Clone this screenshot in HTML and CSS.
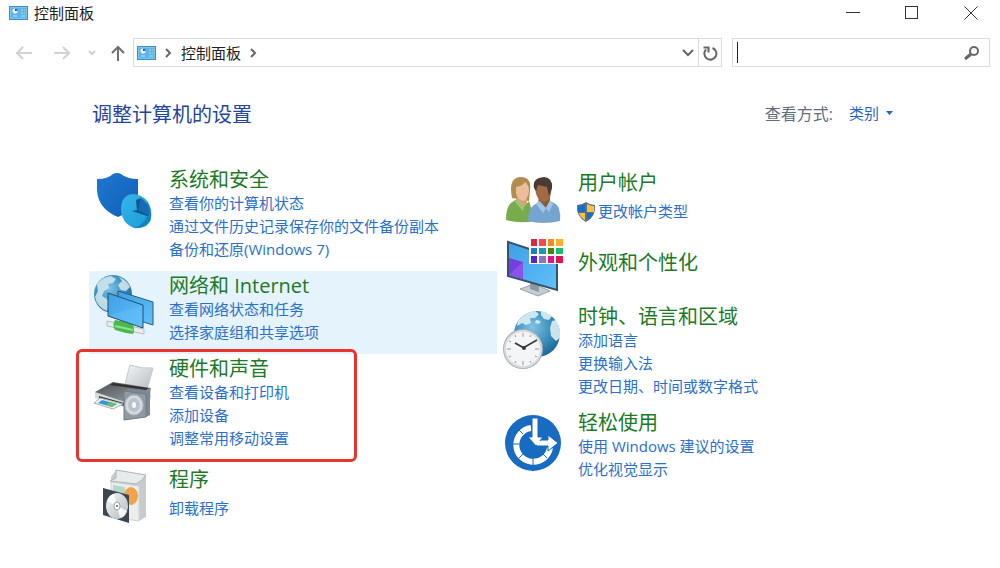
FILE: index.html
```html
<!DOCTYPE html>
<html lang="zh-CN">
<head>
  <meta charset="UTF-8" />
  <meta name="viewport" content="width=device-width, initial-scale=1.0" />
  <title>控制面板</title>
  <link rel="stylesheet" href="styles.css">
</head>
<body>
  <svg width="0" height="0" class="defs" aria-hidden="true">
    <defs>
      <linearGradient id="blue" x1="0" y1="0" x2="1" y2="1"><stop offset="0" stop-color="#1f78cf"/><stop offset="1" stop-color="#0f5fb8"/></linearGradient>
      <linearGradient id="pie" x1="0" y1="0" x2="1" y2="1"><stop offset="0" stop-color="#35b5ea"/><stop offset="1" stop-color="#199bd6"/></linearGradient>
      <linearGradient id="screen" x1="0" y1="0" x2="1" y2="1"><stop offset="0" stop-color="#3d9fe6"/><stop offset="1" stop-color="#62bff8"/></linearGradient>
      <linearGradient id="metal" x1="0" y1="0" x2="1" y2="1"><stop offset="0" stop-color="#f4f6f7"/><stop offset="1" stop-color="#b4bbc0"/></linearGradient>
      <linearGradient id="dark" x1="0" y1="0" x2="1" y2="1"><stop offset="0" stop-color="#4c5053"/><stop offset="1" stop-color="#a0a4a6"/></linearGradient>
      <radialGradient id="globe" cx=".4" cy=".35" r=".7"><stop offset="0" stop-color="#7fc4e4"/><stop offset=".6" stop-color="#388dbb"/><stop offset="1" stop-color="#1d6594"/></radialGradient>
      <symbol id="panel" viewBox="0 0 19 14">
        <rect x=".5" y=".5" width="18" height="13" fill="#79c6f3" stroke="#3d8fc4"/>
        <rect x="2" y="2" width="15" height="10" fill="#5ab4ed"/>
        <circle cx="6" cy="5" r="2.5" fill="#fff"/>
        <path d="M6 5V2.500A2.500 2.500 0 0 1 8.500 5z" fill="#1c5c9c"/>
        <path d="M12 4h2M12 7h2M4 10h4M12 10h4" stroke="#b4e0fb"/>
        <path d="M15 4h1M15 7h1" stroke="#f5d76c"/>
      </symbol>
    </defs>
  </svg>

  <header class="titlebar">
    <svg class="panel-icon" aria-hidden="true"><use href="#panel"/></svg>
    <span class="title">控制面板</span>
    <div class="window-buttons">
      <button aria-label="最小化"><svg width="14" height="14"><path d="M0 6.500h14" stroke="#333"/></svg></button>
      <button aria-label="最大化"><svg width="14" height="14"><rect x=".5" y=".5" width="12" height="12" fill="none" stroke="#333"/></svg></button>
      <button aria-label="关闭"><svg width="14" height="14"><path d="M.5.5l13 13M13.500.5l-13 13" stroke="#333"/></svg></button>
    </div>
  </header>

  <nav class="navbar">
    <div class="history">
      <button aria-label="后退"><svg width="16" height="14" fill="none" stroke="#d2d2d2" stroke-width="2"><path d="M16 7H1M7 1L1 7l6 6"/></svg></button>
      <button aria-label="前进"><svg width="16" height="14" fill="none" stroke="#d2d2d2" stroke-width="2"><path d="M0 7h15M9 1l6 6-6 6"/></svg></button>
      <button class="recent" aria-label="最近浏览的位置"><svg width="8" height="6" fill="none" stroke="#cfcfcf" stroke-width="2"><path d="M1 1l3 3 3-3"/></svg></button>
      <button aria-label="上移"><svg width="16" height="16" fill="none" stroke="#707070" stroke-width="2"><path d="M8 16V2M2 8l6-6 6 6"/></svg></button>
    </div>
    <div class="address">
      <svg class="panel-icon" aria-hidden="true"><use href="#panel"/></svg>
      <svg class="chevron" width="7" height="10" fill="none" stroke="#666" stroke-width="2"><path d="M1 1l4 4-4 4"/></svg>
      <a href="#">控制面板</a>
      <svg class="chevron" width="7" height="10" fill="none" stroke="#666" stroke-width="2"><path d="M1 1l4 4-4 4"/></svg>
      <button class="history-list" aria-label="以前的位置"><svg width="12" height="8" fill="none" stroke="#666" stroke-width="2"><path d="M1 1l5 5 5-5"/></svg></button>
      <button class="refresh" aria-label="刷新"><svg width="16" height="16" fill="none" stroke="#666" stroke-width="2"><path d="M10.500 3A6 6 0 1 1 4 4.500"/><path d="M1.500 2.500H6.500V7.500"/></svg></button>
    </div>
    <div class="search">
      <span class="caret"></span>
      <input type="text" aria-label="搜索控制面板">
      <button aria-label="搜索"><svg width="16" height="16" fill="none" stroke="#666"><circle cx="10" cy="6" r="4" stroke-width="2"/><path d="M7 9l-6 5" stroke-width="3"/></svg></button>
    </div>
  </nav>

  <main>
    <div class="heading">
      <h1>调整计算机的设置</h1>
      <div class="view-by">
        <label for="view">查看方式:</label>
        <select id="view"><option>类别</option></select>
        <svg width="7" height="4"><path d="M0 0h7L3.500 4z" fill="#1f66c4"/></svg>
      </div>
    </div>

    <div class="categories">
      <div class="column">
        <section class="category">
          <svg class="icon" viewBox="0 0 64 60" aria-hidden="true">
            <path d="M4 9Q15 9 20 4Q24 2 28 4Q34 9 45 9V24Q44 39 25 47Q5 39 4 20z" fill="url(#blue)"/>
            <path d="M28 38Q29 24 41 24Q55 26 58 40Q60 51 53 56Q47 59 41 58Q28 53 28 38z" fill="url(#pie)"/>
            <path d="M54 31Q60 42 57 51Q52 58 41 58Q52 54 54 46z" fill="#1283bc"/>
            <path d="M48 28L44 40 56 45Q57 34 48 28z" fill="#1769b2"/>
            <path d="M48 28L43 30 44 40 39 41 54 46 56 45 45 40z" fill="#0e5593"/>
          </svg>
          <div class="text">
            <h2><a href="#">系统和安全</a></h2>
            <a href="#">查看你的计算机状态</a>
            <a href="#">通过文件历史记录保存你的文件备份副本</a>
            <a href="#">备份和还原(Windows 7)</a>
          </div>
        </section>

        <section class="category selected">
          <svg class="icon" viewBox="0 0 64 60" aria-hidden="true">
            <circle cx="20" cy="18" r="19" fill="url(#globe)"/>
            <path d="M4 8Q9 1 18 0l5 3-3 4-5 1 1 4-5 3-2 5 5 3 3 5-3 7Q4 31 2 21l3-6zM26 1q8 3 11 10l-4 4-5-1-3-5 4-4z" fill="#d6e9ee" opacity=".85"/>
            <path d="M25 15l35 11v23L25 38z" fill="url(#screen)" stroke="#2b5b80"/>
            <path d="M14 45l37 8v5l-37-8z" fill="#e8ecec" stroke="#b5bdbf"/>
            <path d="M22 44q9 1 18 4 2 6 0 10-9-1-18-4-3-5 0-10z" fill="#4ab84c"/>
            <path d="M22 50l18 4" stroke="#92df8c" stroke-width="2"/>
            <path d="M15 17l35 12v23L15 40z" fill="url(#screen)" stroke="#28506f"/>
            <path d="M16 39l33-9v21z" fill="#69c3fa" opacity=".4"/>
          </svg>
          <div class="text">
            <h2><a href="#">网络和 Internet</a></h2>
            <a href="#">查看网络状态和任务</a>
            <a href="#">选择家庭组和共享选项</a>
          </div>
        </section>

        <section class="category marked">
          <svg class="icon" viewBox="0 0 64 60" aria-hidden="true">
            <path d="M37 6q11 4 23 3l-6 22-22-6z" fill="url(#metal)" stroke="#c3c9cc"/>
            <path d="M2 33v6l29 9 27-9V29z" fill="#d4d9db"/>
            <path d="M2 33l18-10 38 6-1 4-25 10z" fill="url(#dark)"/>
            <path d="M20 24l36 5-3 2-36-5z" fill="#303335"/>
            <path d="M6 37l25 7v3L6 40z" fill="#343a3e"/>
            <path d="M7 39l23 6-10 5-19-6z" fill="#f0f3f4" stroke="#a9b0b3"/>
            <path d="M9 41l15 4-5 3-14-4z" fill="#3a93d2"/>
            <path d="M17 43l7 2-5 3-6-2z" fill="#6dc06b"/>
            <path d="M31 32l5-2 21 3v23l-4 2z" fill="#7c8992"/>
            <path d="M31 32l22 3v23l-22 3z" fill="#8e9ba5" stroke="#6f7c85"/>
            <ellipse cx="41" cy="46" rx="9" ry="10" fill="#d4dade" stroke="#b4bdc4"/>
            <ellipse cx="41" cy="46" rx="6" ry="7" fill="#bac3ca"/>
            <ellipse cx="41" cy="46" rx="2" ry="3" fill="#f7f9fa"/>
          </svg>
          <div class="text">
            <h2><a href="#">硬件和声音</a></h2>
            <a href="#">查看设备和打印机</a>
            <a href="#">添加设备</a>
            <a href="#">调整常用移动设置</a>
          </div>
        </section>

        <section class="category spaced apart">
          <svg class="icon" viewBox="0 0 64 60" aria-hidden="true">
            <path d="M23 0l30 5v42l-7 4V17L18 13V7z" fill="#c7cccf"/>
            <path d="M23 0l30 5-4 5-6 4-26-3 6-3z" fill="#e8ebec" stroke="#afb5b8"/>
            <path d="M18 12l28 4v35l-28-4z" fill="#eceeee" stroke="#cfd3d4"/>
            <path d="M20 15l12 2v8l-12-2z" fill="#b4d8c5"/>
            <ellipse cx="38" cy="26" rx="7" ry="9" fill="#f2a24a"/>
            <path d="M10 18l26 7v28L10 45z" fill="#3b4650"/>
            <ellipse cx="24" cy="36" rx="11" ry="13" fill="url(#metal)"/>
            <path d="M24 36l-10-5q2-6 7-7zM24 36l10 5q-2 6-7 7z" fill="#fff" opacity=".8"/>
            <ellipse cx="24" cy="36" rx="3" ry="4" fill="#fff" stroke="#98a2a8"/>
            <circle cx="24" cy="36" r="1" fill="#56636b"/>
          </svg>
          <div class="text">
            <h2><a href="#">程序</a></h2>
            <a href="#">卸载程序</a>
          </div>
        </section>
      </div>

      <div class="column right">
        <section class="category spaced">
          <svg class="icon" viewBox="0 0 64 60" aria-hidden="true">
            <path d="M11 25Q7 5 19 4q12 0 10 13l-1 11z" fill="#b48b4e"/>
            <path d="M16 22h10v10l-5 4-6-5z" fill="#d9a47c"/>
            <path d="M15 14q7-1 9-5 4 3 4 9-1 8-6 10-6-2-7-8z" fill="#ebbd98"/>
            <path d="M5 47q0-13 5-17l6-4 7 8 5-6 6 20q-16 3-29-1z" fill="#78ab4d"/>
            <path d="M16 26l7 8-1 4-8-9z" fill="#9cc774"/>
            <path d="M38 22h11v10l-6 5-6-5z" fill="#8c5939"/>
            <path d="M34 15Q32 5 43 5q8 0 8 9l-2 11q-4 5-9 3-5-3-6-13z" fill="#a26a45"/>
            <path d="M33 15Q31 5 43 4q9 1 8 11l-3 8-2-9-9-2-2 6z" fill="#493a34"/>
            <path d="M27 48q0-12 6-16l6-4 6 7 4-7q8 3 9 8 2 6 1 12-17 4-32 0z" fill="#76a4d0"/>
            <path d="M38 28l7 7-3 5-7-9zM49 27l3 4-4 8-3-4z" fill="#a1c5e5"/>
          </svg>
          <div class="text">
            <h2><a href="#">用户帐户</a></h2>
            <a class="uac" href="#">
              <svg width="20" height="20" viewBox="0 0 20 20" aria-hidden="true">
                <path d="M10 0q4 3 9 3 1 12-9 17Q0 15 1 3q5 0 9-3z" fill="#5d7286"/>
                <path d="M9 2v8H2V4q4 0 7-2zM11 11h6q-1 4-6 7z" fill="#1670c6"/>
                <path d="M11 2q3 2 7 2v6h-7zM3 11h6v7q-5-3-6-7z" fill="#fbc142"/>
              </svg>更改帐户类型</a>
          </div>
        </section>

        <section class="category single">
          <svg class="icon" viewBox="0 0 64 60" aria-hidden="true">
            <path d="M19 51l14-5 16 7-12 5z" fill="#c6ccd0" stroke="#9aa3a8"/>
            <path d="M29 43l9 3v8l-9-3z" fill="#8e989e"/>
            <path d="M7 4l49 16v32L7 38z" fill="url(#screen)" stroke="#34546d" stroke-width="2"/>
            <path d="M8 20l14 4v17L8 37z" fill="#7440dc"/>
            <path d="M8 37l14-13v17z" fill="#8f52e8"/>
            <rect x="28" y="0" width="35" height="26" fill="#fff"/>
            <path d="M30 1h6v7h-6z" fill="#d9283f"/><path d="M38 1h7v7h-7z" fill="#fa4654"/><path d="M47 1h6v7h-6z" fill="#fa8b17"/><path d="M55 1h7v7h-7z" fill="#ffae29"/>
            <path d="M30 10h6v6h-6z" fill="#2479cf"/><path d="M38 10h7v6h-7z" fill="#1c96b8"/><path d="M47 10h6v6h-6z" fill="#498608"/><path d="M55 10h7v6h-7z" fill="#16bd70"/>
            <path d="M30 18h6v7h-6z" fill="#5424c8"/><path d="M38 18h7v7h-7z" fill="#8c75bf"/><path d="M47 18h6v7h-6z" fill="#e3138f"/><path d="M55 18h7v7h-7z" fill="#e4124f"/>
          </svg>
          <div class="text">
            <h2><a href="#">外观和个性化</a></h2>
          </div>
        </section>

        <section class="category">
          <svg class="icon" viewBox="0 0 64 60" aria-hidden="true">
            <circle cx="36" cy="27" r="23" fill="url(#globe)"/>
            <path d="M17 14q7-9 17-10l4 3-4 4-5 0 1 5-5 2-4-2-5 3zM40 4q7 1 11 5l-3 4-5-1-3-4zM51 14l4-1q5 8 4 18l-4 3-5-5-1-8zM35 13l5 1-2 3-4-1z" fill="#dceef3" opacity=".9"/>
            <circle cx="22" cy="42" r="20" fill="#a9afb3"/>
            <circle cx="22" cy="42" r="18" fill="#f4f5f6" stroke="#d8dcde" stroke-width="2"/>
            <path d="M22 26v4M22 54v4M6 42h4M34 42h4M14 28l1 2M30 28l-1 2M8 34l2 1M8 50l2-1M14 56l1-2M30 56l-1-2M36 50l-2-1" stroke="#9299a0"/>
            <path d="M23 41L14 36" stroke="#33383c" stroke-width="2"/>
            <path d="M22 41l14-8" stroke="#33383c" stroke-width="1.500"/>
            <circle cx="23" cy="41" r="2" fill="#33383c"/>
          </svg>
          <div class="text">
            <h2><a href="#">时钟、语言和区域</a></h2>
            <a href="#">添加语言</a>
            <a href="#">更换输入法</a>
            <a href="#">更改日期、时间或数字格式</a>
          </div>
        </section>

        <section class="category">
          <svg class="icon" viewBox="0 0 64 60" aria-hidden="true">
            <circle cx="32" cy="30" r="28" fill="#176bc0"/>
            <path d="M30 15A17 17 0 1 0 49 35" fill="none" stroke="#fff" stroke-width="6"/>
            <path d="M22 21l-4-4M18 31h-6M22 41l-4 4M32 45v7M42 41l4 4" stroke="#176bc0"/>
            <path d="M34 27h13v-5l10 8-10 8v-5H34z" fill="#fff" stroke="#176bc0"/>
            <path d="M31 5h6v19h5l-7 9-8-9h4z" fill="#fff" stroke="#176bc0"/>
            <path d="M36 28h8v4h-9z" fill="#fff"/>
          </svg>
          <div class="text">
            <h2><a href="#">轻松使用</a></h2>
            <a href="#">使用 Windows 建议的设置</a>
            <a href="#">优化视觉显示</a>
          </div>
        </section>
      </div>
    </div>
  </main>
</body>
</html>
```

FILE: styles.css
```css
* { box-sizing: border-box; }
body {
  margin: 0;
  background: #fff;
  color: #222;
  font-family: "Open Sans", "Noto Sans CJK SC", sans-serif;
  font-size: 15px;
}
a { color: #2a70cc; text-decoration: none; }
a:hover { text-decoration: underline; }
button {
  display: flex;
  align-items: center;
  justify-content: center;
  padding: 0;
  border: none;
  background: none;
}
svg { flex: none; }
.defs { position: absolute; }
.panel-icon { width: 19px; height: 14px; }

.titlebar {
  display: flex;
  align-items: center;
  height: 26px;
  padding-left: 9px;
}
.title { margin-left: 6px; line-height: 26px; }
.window-buttons { display: flex; margin-left: auto; }
.window-buttons button { width: 59px; height: 26px; }

.navbar {
  display: flex;
  align-items: center;
  margin-top: 12px;
  padding: 0 10px 0 16px;
}
.history { display: flex; align-items: center; width: 117px; }
.history button { margin-right: 22px; }
.history button.recent { margin: 0 14px 0 -4px; }
.history button:last-child { margin-right: 0; }
.address, .search {
  display: flex;
  align-items: center;
  height: 29px;
  border: 1px solid #dcdcdc;
}
.address { flex: 1; padding-left: 3px; }
.address a { color: #222; }
.chevron { margin: 0 9px; }
.history-list { width: 20px; height: 27px; margin-left: auto; }
.refresh {
  width: 23px;
  height: 27px;
  border-left: 1px solid #dcdcdc;
}
.search { flex: 0 0 258px; margin-left: 10px; padding: 0 9px 0 4px; }
.caret { width: 1px; height: 21px; background: #222; }
.search input {
  flex: 1;
  min-width: 0;
  border: none;
  outline: none;
  font: inherit;
}

main { padding: 0 95px 0 89px; }
.heading {
  display: flex;
  align-items: center;
  justify-content: space-between;
  margin-top: 32px;
  padding: 0 12px 0 3px;
}
h1 {
  margin: 0;
  color: #2345a0;
  font-size: 20px;
  font-weight: 400;
  line-height: 32px;
}
.view-by { display: flex; align-items: center; padding-bottom: 4px; }
.view-by label { color: #626d7c; font-size: 16px; }
.view-by select {
  margin: 0 6px 0 16px;
  padding: 0;
  border: none;
  appearance: none;
  background: none;
  color: #1f66c4;
  font: inherit;
}

.categories {
  display: grid;
  grid-template-columns: 1fr 1fr;
  margin-top: 34px;
}
.column.right { padding-top: 3px; }
.category {
  display: flex;
  position: relative;
  padding: 2px 0 10px;
}
.category.selected { background: #e5f3fd; }
.icon {
  width: 64px;
  height: 60px;
  margin: 3px 12px -10px 4px;
  overflow: visible;
}
.right .icon { margin-right: 13px; }
.text { display: flex; flex-direction: column; align-items: flex-start; }
.text > a { line-height: 23px; }
h2 {
  margin: 0;
  font-size: 20px;
  font-weight: 400;
  line-height: 25px;
}
h2 a { color: #1b7a25; }
.spaced h2 { margin-bottom: 5px; }
.apart { margin-top: 5px; }
.single { padding-bottom: 14px; }
.single .text { padding-top: 15px; }
.text > .uac { display: flex; align-items: center; gap: 2px; margin-left: -2px; }

/* red frame around the hardware category */
.marked::after {
  content: "";
  box-sizing: border-box;
  position: absolute;
  top: -5px;
  bottom: -2px;
  left: -13px;
  width: 281px;
  border: 3px solid #e8342f;
  border-radius: 6px;
  pointer-events: none;
}
```
